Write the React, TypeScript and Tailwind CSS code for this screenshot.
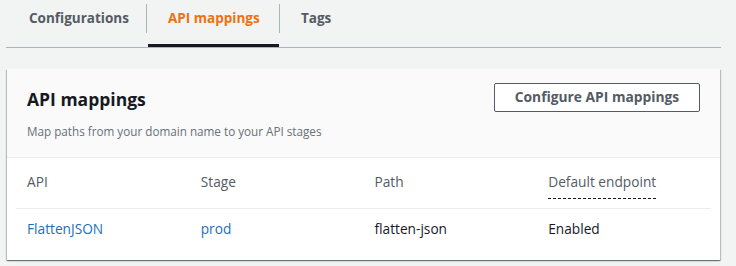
const tabs = [
  { label: 'Configurations', active: false },
  { label: 'API mappings', active: true },
  { label: 'Tags', active: false },
];

const mappings = [{ api: 'FlattenJSON', stage: 'prod', path: 'flatten-json', defaultEndpoint: 'Enabled' }];

function Tabs() {
  return (
    <div className="flex h-[48px] border-b border-[#aab7b8]">
      {tabs.map((tab, index) => (
        <div key={tab.label} className={`flex flex-col ${index === 0 ? 'w-[140px]' : index === 1 ? 'w-[133px]' : 'w-[120px]'}`}>
          <div
            className={`mt-[4px] flex h-[29px] items-center text-[13.5px] font-bold ${
              index === 0 ? 'pl-[23px]' : 'border-l border-[#aab7b8] pl-[21px]'
            } ${tab.active ? 'text-[#ec7211]' : 'text-[#545b64]'}`}
          >
            {tab.label}
          </div>
          {tab.active && <div className="mt-auto ml-[2px] h-[3px] bg-[#16191f]" />}
        </div>
      ))}
    </div>
  );
}

export default function App() {
  return (
    <div className="h-[266px] w-[736px] overflow-hidden bg-[#f2f3f3] pr-[15px] pl-[6px] font-['Open_Sans',sans-serif] text-[#16191f]">
      <Tabs />

      <section className="mt-[21px] mr-[1px] ml-[1px] h-[191px] bg-white shadow-[0_1px_1px_0_rgba(0,28,36,0.35),1px_1px_1px_0_rgba(0,28,36,0.2),-1px_1px_1px_0_rgba(0,28,36,0.2)]">
        <div className="flex items-start justify-between border-b border-[#eaeded] bg-[#fafafa] px-[20px] pt-[14px] pb-[18px]">
          <div className="pt-[5px]">
            <h2 className="text-[17.5px] leading-[22px] font-bold text-[#16191f]">API mappings</h2>
            <p className="mt-[13px] text-[11.7px] leading-[16px] text-[#687078]">
              Map paths from your domain name to your API stages
            </p>
          </div>
          <button className="h-[29px] w-[206px] rounded-[2px] border border-[#545b64] bg-white text-[13.8px] font-bold text-[#545b64]">
            Configure API mappings
          </button>
        </div>

        <div className="mr-[9px] ml-[9px]">
          <div className="grid h-[51px] grid-cols-4 border-b border-[#eaeded] pt-[14px] text-[13.7px] leading-[20px] text-[#545b64]">
            <div className="pl-[11px]">API</div>
            <div className="pl-[11px]">Stage</div>
            <div className="pl-[11px]">Path</div>
            <div className="pl-[11px]">
              <span className="inline-block border-b border-dashed border-[#16191f] pb-[6px]">Default endpoint</span>
            </div>
          </div>
          {mappings.map((row) => (
            <div key={row.api} className="grid grid-cols-4 pt-[10px] text-[13.7px] leading-[20px]">
              <div className="pl-[11px] text-[#1a6fbf]">{row.api}</div>
              <div className="pl-[11px] text-[#1a6fbf]">{row.stage}</div>
              <div className="pl-[11px]">{row.path}</div>
              <div className="pl-[11px]">{row.defaultEndpoint}</div>
            </div>
          ))}
        </div>
      </section>
    </div>
  );
}
